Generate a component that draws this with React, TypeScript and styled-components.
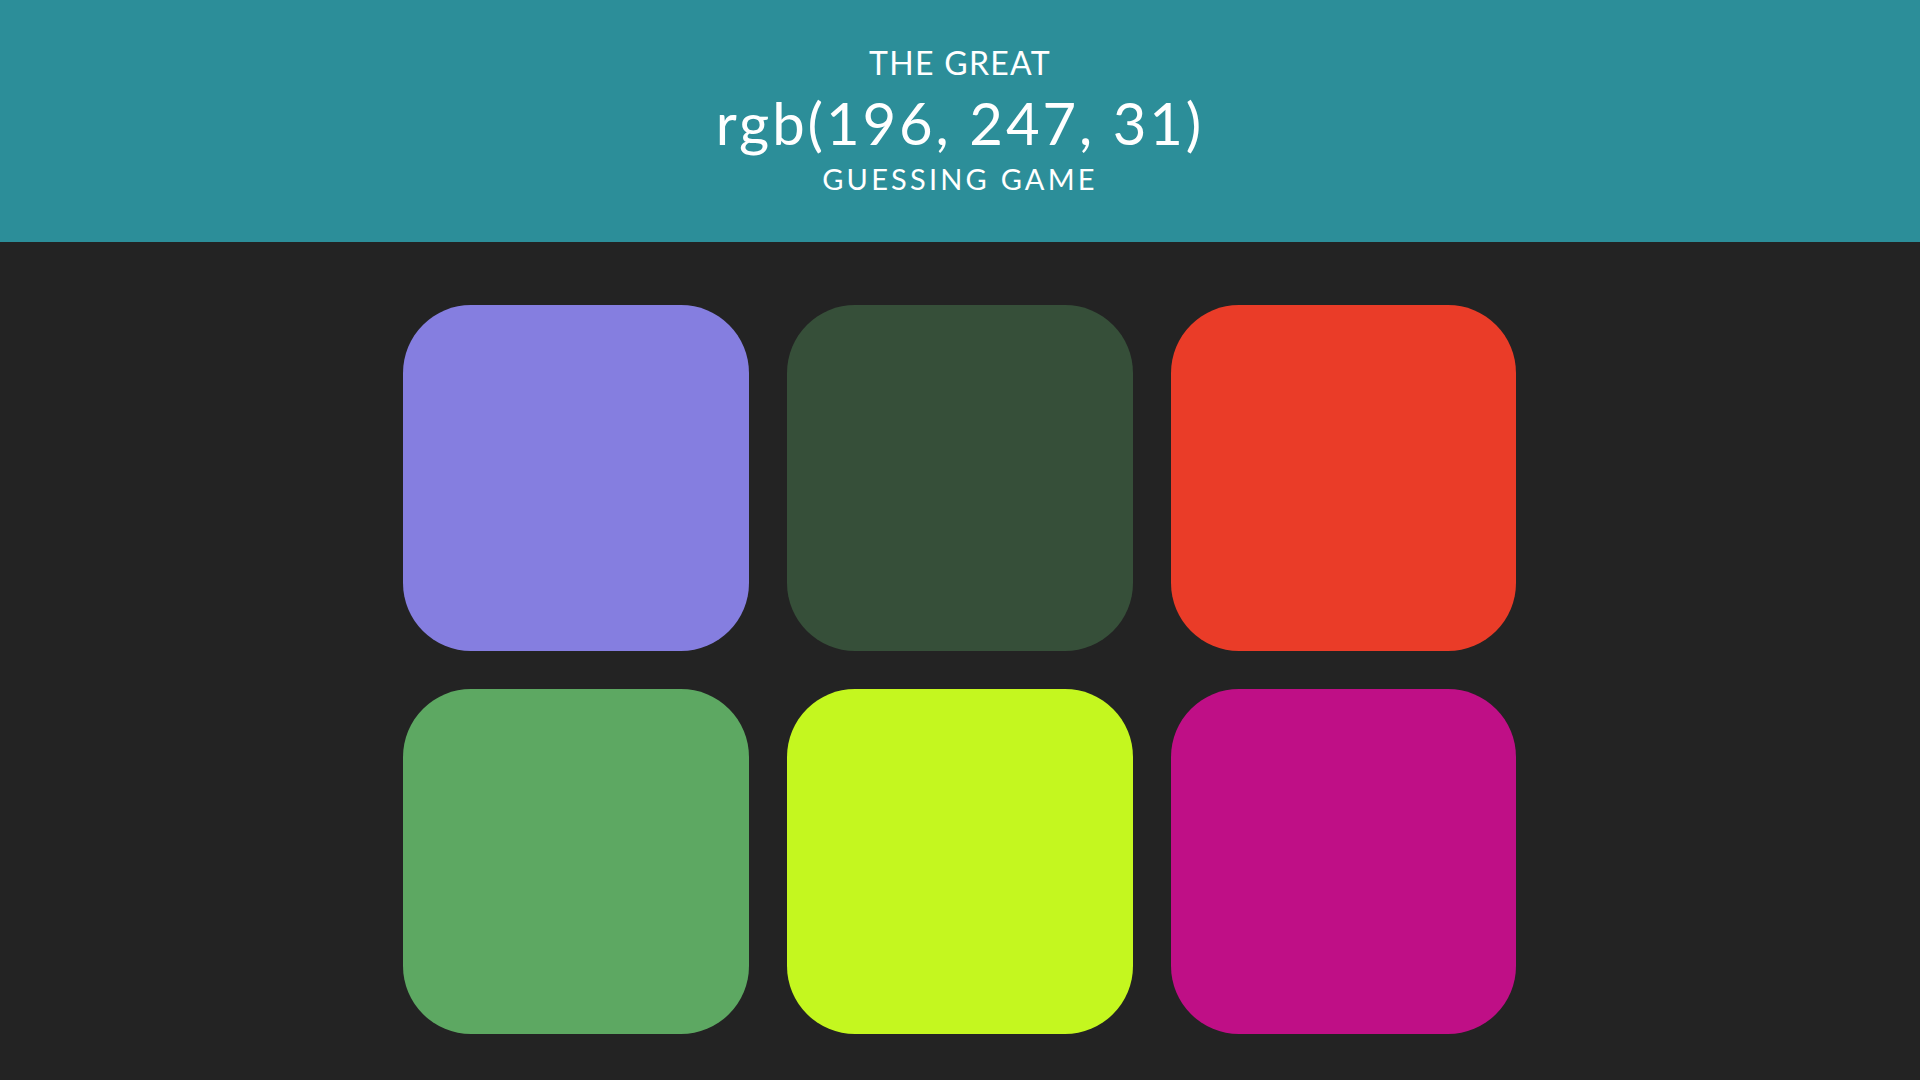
import React from "react";
import styled, { createGlobalStyle } from "styled-components";

const GlobalStyle = createGlobalStyle`
  html, body {
    margin: 0;
    padding: 0;
    background: #232323;
  }
  body {
    font-family: Lato, "Noto Sans", "Liberation Sans", sans-serif;
  }
`;

const Header = styled.header`
  height: 242px;
  box-sizing: border-box;
  padding-top: 43px;
  background: #2c8e99;
  color: #ffffff;
  text-align: center;
`;

const Line = styled.div<{ $size: number; $lh: number; $ls?: number }>`
  font-size: ${(p) => p.$size}px;
  line-height: ${(p) => p.$lh}px;
  letter-spacing: ${(p) => p.$ls ?? 0}px;
  font-weight: 400;
  white-space: nowrap;
`;

const Board = styled.main`
  width: 1152px;
  margin: 63px auto 0;
  display: flex;
  flex-wrap: wrap;
`;

const Square = styled.div<{ $color: string }>`
  width: 30%;
  aspect-ratio: 1 / 1;
  margin: 19.1px 1.66%;
  background: ${(p) => p.$color};
  border-radius: 68px;
  &:nth-child(-n + 3) {
    margin-top: 0;
  }
`;

const colors = [
  "rgb(133, 126, 224)",
  "rgb(54, 79, 57)",
  "rgb(234, 60, 40)",
  "rgb(93, 168, 98)",
  "rgb(196, 247, 31)",
  "rgb(191, 15, 134)",
];

export default function App() {
  return (
    <>
      <GlobalStyle />
      <Header>
        <Line $size={32} $lh={40} $ls={1.3}>THE GREAT</Line>
        <Line $size={58} $lh={80} $ls={2.9}>rgb(196, 247, 31)</Line>
        <Line $size={29} $lh={31} $ls={3.2}>GUESSING GAME</Line>
      </Header>
      <Board>
        {colors.map((c) => (
          <Square key={c} $color={c} />
        ))}
      </Board>
    </>
  );
}
